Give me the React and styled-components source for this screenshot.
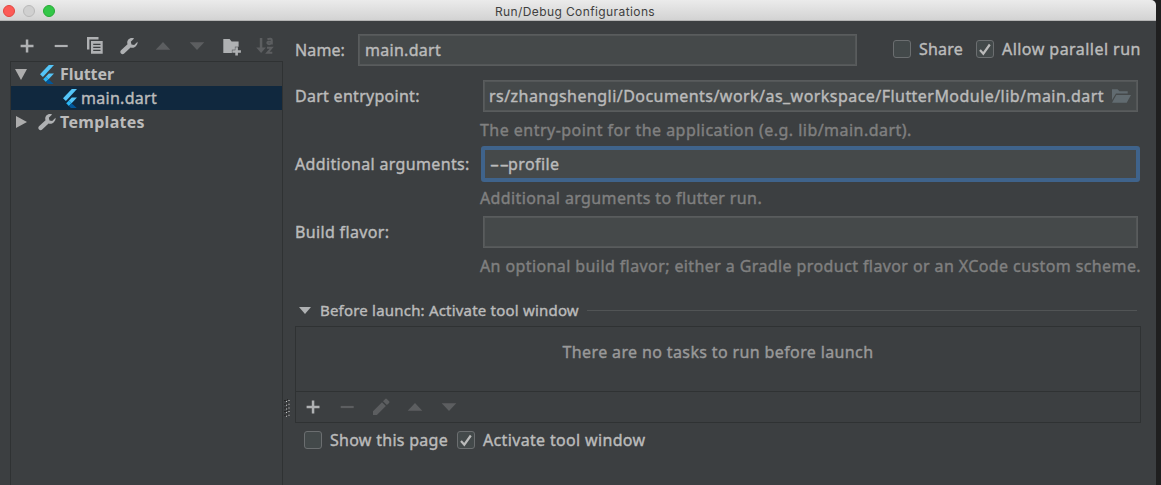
import React from "react";
import styled, { createGlobalStyle, css } from "styled-components";

const Global = createGlobalStyle`
  * { box-sizing: border-box; }
  html, body { margin: 0; height: 485px; overflow: hidden; background: #1f1f1f; }
`;

const Dialog = styled.div`
  display: flex;
  flex-direction: column;
  width: 1156px;
  height: 485px;
  background: #3c3f41;
  color: #bbbbbb;
  font: 16px/24px "Noto Sans", sans-serif;
  -webkit-text-stroke: 0.4px currentColor;
  white-space: nowrap;
  border-top-right-radius: 5px;
  overflow: hidden;
`;

const TitleBar = styled.header`
  display: grid;
  grid-template-columns: 1fr auto 1fr;
  align-items: center;
  flex: none;
  height: 21px;
  padding: 0 9px 0 3px;
  background: linear-gradient(#ebebeb, #d3d3d3);
  border-bottom: 1px solid #b4b4b4;
`;

const Lights = styled.div`
  display: flex;
  gap: 8px;
`;

const Light = styled.span`
  width: 12px;
  height: 12px;
  border-radius: 50%;
  background: ${(p) => p.$fill};
  border: 1px solid ${(p) => p.$rim};
`;

const Title = styled.h1`
  margin: 2px 0 0;
  font: 12px/20px Inter, sans-serif;
  letter-spacing: 0.4px;
  color: #404040;
  -webkit-text-stroke: 0;
`;

const Body = styled.div`
  display: flex;
  flex: 1;
  min-height: 0;
`;

const Sidebar = styled.aside`
  display: flex;
  flex-direction: column;
  width: 273px;
  margin-left: 10px;
`;

const Toolbar = styled.div`
  display: flex;
  align-items: center;
  gap: 14px;
  flex: none;
  height: 40px;
  padding: 10px 0 0 7px;
`;

const Tree = styled.div`
  flex: 1;
  border: 1px solid #2f3233;
  border-bottom: 0;
`;

const TreeRow = styled.div`
  display: flex;
  align-items: center;
  height: 24px;
  padding-left: ${(p) => (p.$child ? 52 : 4)}px;
  background: ${(p) => (p.$selected ? "#10283e" : "transparent")};
  font-weight: ${(p) => (p.$child ? 400 : 700)};
  -webkit-text-stroke-width: ${(p) => (p.$child ? 0.4 : 0)}px;
`;

const Arrow = styled.span`
  display: flex;
  width: ${(p) => p.$width}px;
`;

const Label = styled.span`
  letter-spacing: ${(p) => p.$track ?? 0.3}px;
  margin-left: ${(p) => p.$gap ?? 0}px;
`;

const Splitter = styled.div`
  display: flex;
  align-items: flex-start;
  width: 12px;
  padding: 378px 0 0 1px;
`;

const Main = styled.main`
  display: flex;
  flex-direction: column;
  width: 846px;
  padding-top: 13px;
`;

const NameRow = styled.div`
  display: flex;
  align-items: center;
  height: 32px;
`;

const NameLabel = styled(Label)`
  width: 63px;
`;

const Field = styled.div`
  display: flex;
  align-items: center;
  justify-content: space-between;
  width: ${(p) => p.$width ?? 655}px;
  height: 32px;
  padding: 0 5px 0 ${(p) => p.$inset ?? 6}px;
  background: #45494a;
  border: 1px solid #595c5d;
  box-shadow: inset 0 0 0 1px #545758;
  ${(p) =>
    p.$focused &&
    css`
      width: 659px;
      height: 36px;
      margin: -2px;
      padding-left: 5px;
      border: 4px solid #3f638b;
      border-radius: 3px;
      box-shadow: none;
    `}
`;

const Options = styled.div`
  display: flex;
  align-items: center;
  height: 18px;
`;

const NameOptions = styled(Options)`
  margin-left: 36px;
  margin-top: -2px;
`;

const CheckLabel = styled.label`
  display: flex;
  align-items: center;
  gap: 8px;
  letter-spacing: ${(p) => p.$track}px;
  width: ${(p) => p.$width}px;
`;

const Box = styled.span`
  display: flex;
  align-items: center;
  justify-content: center;
  flex: none;
  width: 18px;
  height: 18px;
  background: #43494a;
  border: 1px solid #6b6e70;
  border-radius: 3px;
`;

const Form = styled.div`
  display: grid;
  grid-template-columns: 188px 655px;
  grid-auto-rows: 32px 36px;
  align-items: center;
  margin-top: 14px;
`;

const Hint = styled.div`
  grid-column: 2;
  margin-left: -3px;
  color: #808080;
  letter-spacing: ${(p) => p.$track}px;
`;

const Dashes = styled.span`
  display: inline-block;
  width: 18px;
  transform: scaleX(1.75);
  transform-origin: left;
`;

const SectionHeader = styled.div`
  display: flex;
  align-items: center;
  height: 22px;
  margin-top: 15px;
  padding: 0 4px 0 4px;
  font-size: 15px;
`;

const Rule = styled.span`
  flex: 1;
  height: 1px;
  margin-left: 8px;
  background: #515455;
`;

const TaskPanel = styled.section`
  height: 97px;
  margin-top: 5px;
  border: 1px solid #2f3233;
`;

const TaskList = styled.div`
  height: 65px;
  padding-top: 13px;
  border-bottom: 1px solid #2f3233;
  text-align: center;
  color: #999999;
  letter-spacing: 0.37px;
`;

const TaskTools = styled.div`
  display: flex;
  align-items: center;
  gap: 14px;
  height: 30px;
  padding-left: 7px;
`;

const PageOptions = styled(Options)`
  margin: 8px 0 0 9px;
`;

const Svg = styled.svg`
  display: block;
  flex: none;
  overflow: visible;
`;

const ON = "#afb1b3";
const OFF = "#5c5e60";

const Icon = ({ color = ON, children }) => (
  <Svg width="20" height="20" viewBox="0 0 20 20" fill={color}>
    {children}
  </Svg>
);

const Plus = () => <Icon><path d="M8.800 3.600h2.500v5.200h5.200v2.400h-5.200v5.200H8.800v-5.200H3.600V8.800h5.200z" /></Icon>;
const Minus = ({ color }) => <Icon color={color}><path d="M3.700 8.900h13v2.200h-13z" /></Icon>;
const Up = () => <Icon color={OFF}><path d="M10 6l7.300 7.800H2.700z" /></Icon>;
const Down = () => <Icon color={OFF}><path d="M2.700 6.200h14.600L10 14z" /></Icon>;
const Copy = () => (
  <Icon>
    <path d="M2 1h11.500v2.400H4.400V13.500H2z" />
    <path fillRule="evenodd" d="M6 5h11.700v12.700H6zM8.200 7.800v1.300h7.300V7.800zM8.200 10.800v1.300h7.300v-1.300zM8.200 13.800v1.300h7.300v-1.300z" />
  </Icon>
);
const Wrench = () => (
  <Icon>
    <path transform="translate(.6 .6)" d="M17.900 5.200l-3.300 3.300-2.700-.7-.7-2.700 3.300-3.300C12.300 1 10 1.400 8.700 3c-1.200 1.500-1.300 3.200-.8 4.700L1.400 13.700c-.9.900-.9 2.300 0 3.200.9.900 2.300.9 3.200 0l6.400-6.100c1.700.6 3.600.3 5-1 1.500-1.300 2.200-3 1.900-4.600z" />
  </Icon>
);
const NewFolder = () => (
  <Icon>
    <path d="M2.300 3h6.300l2 2.500h7v5.200h-3.700v3h-3v3.200H2.300z" />
    <path d="M14.300 11.300h2.600v2.900h3v2.500h-3v2.900h-2.600v-2.900h-3v-2.500h3z" />
  </Icon>
);
const Sort = () => (
  <Icon color={OFF}>
    <path d="M4.800 2h2.500v9.500h3.600L6.100 17l-4.900-5.500h3.600z" />
    <g fill="none" stroke={OFF} strokeWidth="2">
      <path d="M12.400 3.200q4.400-1.300 4.400 1.100v4.200M16.800 5.500q-4.500-.2-4.500 1.500 1.500 2.400 4.500 0" />
      <path d="M12 11.800h4.600l-4.300 5h5" />
    </g>
  </Icon>
);
const Pencil = () => (
  <Icon color={OFF}>
    <path d="M2 14.200l9-9 3.900 3.900-9 9H2zM12 4.200l2.200-2.200q.8-.8 1.600 0l2.300 2.300q.8.8 0 1.600L15.900 8.100z" />
  </Icon>
);
const Flutter = () => (
  <Svg width="14" height="19" viewBox="0 0 14 19">
    <path fill="#54c5f8" d="M8.800 0H14L2.900 11.900 0 9.300z" />
    <path fill="#54c5f8" d="M8.800 8.500H14L8.600 14.300 5.900 11.600z" />
    <path fill="#29b6f6" d="M3.200 14.300l2.700-2.700 2.700 2.700L5.900 17z" />
    <path fill="#01579b" d="M5.900 17l2.700-2.700L13.700 19H7.900z" />
  </Svg>
);
const Expanded = () => <Svg width="12" height="11"><path fill="#adadad" d="M0 0h12L6 11z" /></Svg>;
const Collapsed = () => <Svg width="12" height="12"><path fill="#adadad" d="M1 0l11 6-11 6z" /></Svg>;
const OpenFolder = () => (
  <Svg width="21" height="16" viewBox="0 0 21 16" fill="#616b70">
    <path d="M1 1.200h5.500l2 2h8.200v2.300H5L1 12z" />
    <path d="M5.300 7H20L15.700 14.700H1z" />
  </Svg>
);
const Tick = () => (
  <Svg width="12" height="13" viewBox="0 0 12 13">
    <path d="M1 7l3.300 3.700L10.800 1.500" fill="none" stroke="#bbbbbb" strokeWidth="2.200" />
  </Svg>
);
const Grip = () => (
  <Svg width="6" height="19">
    {[0, 1, 2, 3, 4].map((i) => (
      <g key={i} transform={`translate(0 ${i * 3.7})`}>
        <path fill="#242424" d="M0 1h2v1H0zM3 0h1v1H3z" />
        <path fill="#c8c8c8" d="M2 2h1v1H2z" />
        <path fill="#8c8c8c" d="M4 1h2v1H4z" />
      </g>
    ))}
  </Svg>
);

const Checkbox = ({ checked, track, width, children }) => (
  <CheckLabel $track={track} $width={width}>
    <Box>{checked && <Tick />}</Box>
    {children}
  </CheckLabel>
);

export default function App() {
  return (
    <>
      <Global />
      <Dialog>
        <TitleBar>
          <Lights>
            <Light $fill="#fc5b57" $rim="#e2463f" />
            <Light $fill="#d0d0d0" $rim="#b9b9b9" />
            <Light $fill="#33c748" $rim="#27aa35" />
          </Lights>
          <Title>Run/Debug Configurations</Title>
        </TitleBar>
        <Body>
          <Sidebar>
            <Toolbar>
              <Plus />
              <Minus />
              <Copy />
              <Wrench />
              <Up />
              <Down />
              <NewFolder />
              <Sort />
            </Toolbar>
            <Tree>
              <TreeRow>
                <Arrow $width={25}><Expanded /></Arrow>
                <Flutter />
                <Label $track={-0.07} $gap={6}>Flutter</Label>
              </TreeRow>
              <TreeRow $child $selected>
                <Flutter />
                <Label $track={0.28} $gap={4}>main.dart</Label>
              </TreeRow>
              <TreeRow>
                <Arrow $width={22}><Collapsed /></Arrow>
                <Wrench />
                <Label $gap={3}>Templates</Label>
              </TreeRow>
            </Tree>
          </Sidebar>
          <Splitter><Grip /></Splitter>
          <Main>
            <NameRow>
              <NameLabel $track={0.12}>Name:</NameLabel>
              <Field $width={499}><Label $track={0.28}>main.dart</Label></Field>
              <NameOptions>
                <Checkbox track={0.2} width={83}>Share</Checkbox>
                <Checkbox checked track={0.46}>Allow parallel run</Checkbox>
              </NameOptions>
            </NameRow>
            <Form>
              <Label $track={0.28}>Dart entrypoint:</Label>
              <Field $inset={5}>
                <Label $track={0.455}>rs/zhangshengli/Documents/work/as_workspace/FlutterModule/lib/main.dart</Label>
                <OpenFolder />
              </Field>
              <Hint $track={0.47}>The entry-point for the application (e.g. lib/main.dart).</Hint>
              <Label $track={0.34}>Additional arguments:</Label>
              <Field $focused><Label $track={0.4}><Dashes>--</Dashes>profile</Label></Field>
              <Hint $track={0.375}>Additional arguments to flutter run.</Hint>
              <Label $track={0.34}>Build flavor:</Label>
              <Field />
              <Hint $track={0.4}>An optional build flavor; either a Gradle product flavor or an XCode custom scheme.</Hint>
            </Form>
            <SectionHeader>
              <Svg width="12" height="7"><path fill={ON} d="M0 0h12L6 7z" /></Svg>
              <Label $track={0.2} $gap={9}>Before launch: Activate tool window</Label>
              <Rule />
            </SectionHeader>
            <TaskPanel>
              <TaskList>There are no tasks to run before launch</TaskList>
              <TaskTools>
                <Plus />
                <Minus color={OFF} />
                <Pencil />
                <Up />
                <Down />
              </TaskTools>
            </TaskPanel>
            <PageOptions>
              <Checkbox track={0.28} width={153}>Show this page</Checkbox>
              <Checkbox checked track={0.34}>Activate tool window</Checkbox>
            </PageOptions>
          </Main>
        </Body>
      </Dialog>
    </>
  );
}
